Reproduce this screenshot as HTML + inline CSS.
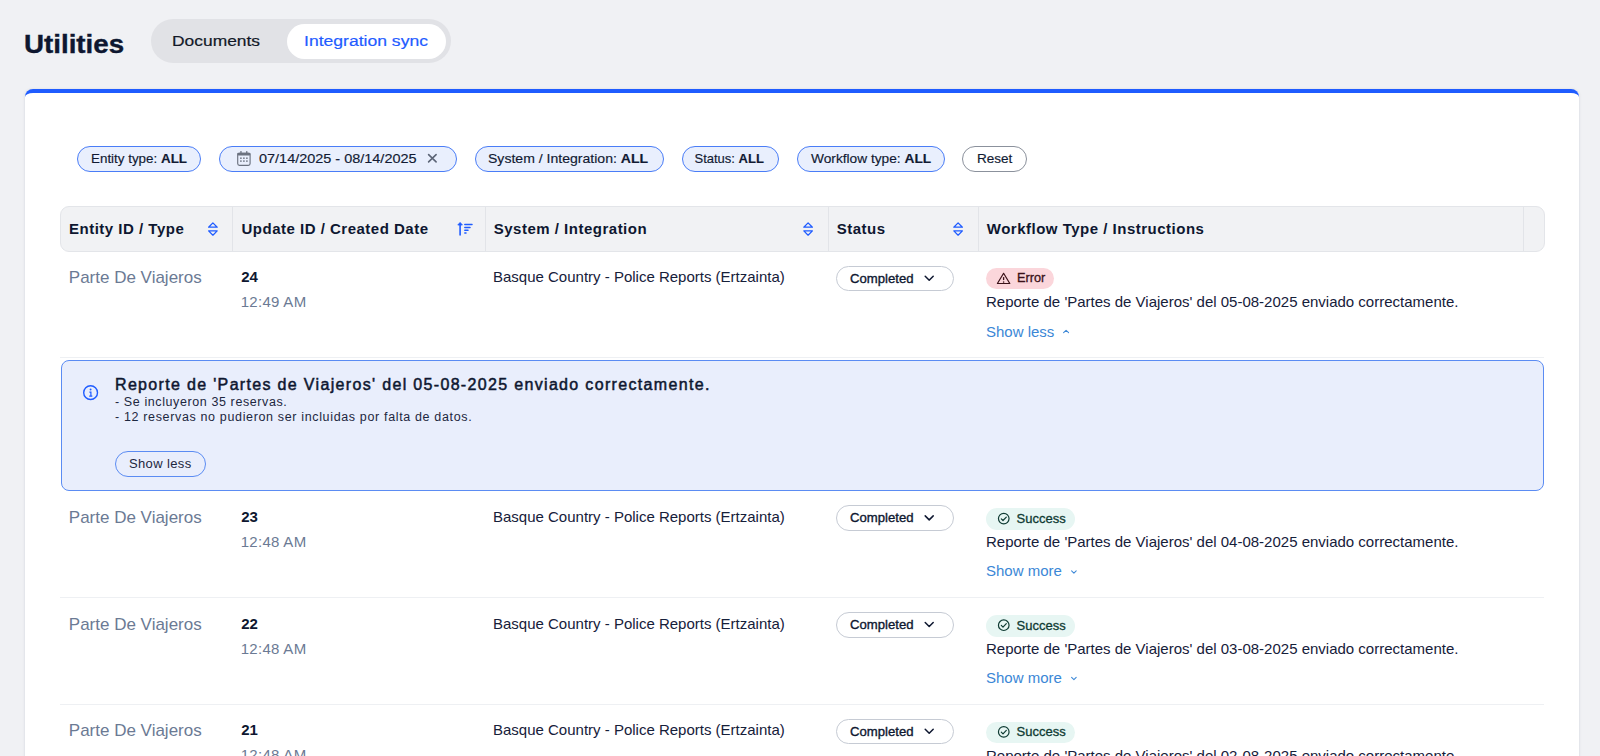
<!DOCTYPE html>
<html><head><meta charset="utf-8"><style>
html,body{margin:0;padding:0;}
body{width:1600px;height:756px;overflow:hidden;position:relative;background:#f0f1f4;font-family:"Liberation Sans",sans-serif;}
.t{position:absolute;white-space:nowrap;}
.b{position:absolute;box-sizing:border-box;}
</style></head><body>
<div class="t " style="left:24px;top:31.84px;font-size:25px;line-height:25px;color:#0e1730;font-weight:700;transform:scaleX(1.109);transform-origin:0 0;-webkit-text-stroke:0.35px #0e1730;">Utilities</div>
<div class="b" style="left:151px;top:19.3px;width:299.5px;height:43.4px;background:#e1e2e6;border-radius:22px;"></div>
<div class="b" style="left:286.5px;top:23.9px;width:159.5px;height:34.9px;background:#fff;border-radius:17.5px;"></div>
<div class="t " style="left:172px;top:32.88px;font-size:15.5px;line-height:15.5px;color:#111827;font-weight:400;transform:scaleX(1.123);transform-origin:0 0;-webkit-text-stroke:0.2px #111827;">Documents</div>
<div class="t " style="left:304px;top:32.88px;font-size:15.5px;line-height:15.5px;color:#1f5cff;font-weight:400;transform:scaleX(1.133);transform-origin:0 0;-webkit-text-stroke:0.2px #1f5cff;">Integration sync</div>
<div class="b" style="left:25px;top:89px;width:1554px;height:700px;background:#fff;border-radius:8px;border-top:4px solid #1f5cff;box-shadow:0.5px 0 0 #e2e4e9, -0.5px 0 0 #e2e4e9, 1px 0 3px rgba(20,30,60,0.05), -1px 0 3px rgba(20,30,60,0.05);"></div>
<div class="b" style="left:77px;top:145.5px;width:124px;height:26px;background:#e9effd;border:1.4px solid #4a7df7;border-radius:14px;box-sizing:border-box;"></div>
<div class="t " style="left:91px;top:152.20px;font-size:13px;line-height:13px;color:#111a33;font-weight:400;transform:scaleX(1.03);transform-origin:0 0;-webkit-text-stroke:0.15px #111a33;">Entity type: <b>ALL</b></div>
<div class="b" style="left:219px;top:145.5px;width:238px;height:26px;background:#e9effd;border:1.4px solid #4a7df7;border-radius:14px;box-sizing:border-box;"></div>
<div class="b" style="left:475px;top:145.5px;width:189px;height:26px;background:#e9effd;border:1.4px solid #4a7df7;border-radius:14px;box-sizing:border-box;"></div>
<div class="t " style="left:488px;top:152.20px;font-size:13px;line-height:13px;color:#111a33;font-weight:400;transform:scaleX(1.081);transform-origin:0 0;-webkit-text-stroke:0.15px #111a33;">System / Integration: <b>ALL</b></div>
<div class="b" style="left:682px;top:145.5px;width:97px;height:26px;background:#e9effd;border:1.4px solid #4a7df7;border-radius:14px;box-sizing:border-box;"></div>
<div class="t " style="left:694.5px;top:152.20px;font-size:13px;line-height:13px;color:#111a33;font-weight:400;transform:scaleX(1.0);transform-origin:0 0;-webkit-text-stroke:0.15px #111a33;">Status: <b>ALL</b></div>
<div class="b" style="left:797px;top:145.5px;width:148px;height:26px;background:#e9effd;border:1.4px solid #4a7df7;border-radius:14px;box-sizing:border-box;"></div>
<div class="t " style="left:810.5px;top:152.20px;font-size:13px;line-height:13px;color:#111a33;font-weight:400;transform:scaleX(1.055);transform-origin:0 0;-webkit-text-stroke:0.15px #111a33;">Workflow type: <b>ALL</b></div>
<div class="t " style="left:258.6px;top:152.20px;font-size:13px;line-height:13px;color:#111a33;font-weight:400;transform:scaleX(1.112);transform-origin:0 0;-webkit-text-stroke:0.15px #111a33;">07/14/2025 - 08/14/2025</div>
<div class="b" style="left:962px;top:145.5px;width:64.5px;height:26px;background:#fff;border:1.4px solid #8b919c;border-radius:14px;box-sizing:border-box;"></div>
<div class="t " style="left:976.6px;top:152.20px;font-size:13px;line-height:13px;color:#111a33;font-weight:400;transform:scaleX(1.04);transform-origin:0 0;-webkit-text-stroke:0.15px #111a33;">Reset</div>
<div class="b" style="left:60.25px;top:206.25px;width:1484.5px;height:45.5px;background:#f1f2f4;border:1px solid #e3e5e9;border-radius:9px;box-sizing:border-box;"></div>
<div class="b" style="left:232.0px;top:207px;width:1px;height:44px;background:#e2e4e8;"></div>
<div class="b" style="left:484.5px;top:207px;width:1px;height:44px;background:#e2e4e8;"></div>
<div class="b" style="left:828.0px;top:207px;width:1px;height:44px;background:#e2e4e8;"></div>
<div class="b" style="left:977.5px;top:207px;width:1px;height:44px;background:#e2e4e8;"></div>
<div class="b" style="left:1522.8px;top:207px;width:1px;height:44px;background:#e2e4e8;"></div>
<div class="t " style="left:69px;top:221.30px;font-size:15px;line-height:15px;color:#0e1730;font-weight:700;letter-spacing:0.5px;">Entity ID / Type</div>
<div class="t " style="left:241.5px;top:221.30px;font-size:15px;line-height:15px;color:#0e1730;font-weight:700;letter-spacing:0.5px;">Update ID / Created Date</div>
<div class="t " style="left:493.75px;top:221.30px;font-size:15px;line-height:15px;color:#0e1730;font-weight:700;letter-spacing:0.5px;">System / Integration</div>
<div class="t " style="left:836.75px;top:221.30px;font-size:15px;line-height:15px;color:#0e1730;font-weight:700;letter-spacing:0.5px;">Status</div>
<div class="t " style="left:986.8px;top:221.30px;font-size:15px;line-height:15px;color:#0e1730;font-weight:700;letter-spacing:0.5px;">Workflow Type / Instructions</div>
<div class="t " style="left:68.8px;top:269.21px;font-size:17px;line-height:17px;color:#6b7a94;font-weight:400;">Parte De Viajeros</div>
<div class="t " style="left:241.2px;top:269.20px;font-size:15px;line-height:15px;color:#0e1730;font-weight:700;">24</div>
<div class="t " style="left:240.7px;top:294.40px;font-size:15px;line-height:15px;color:#6b7a94;font-weight:400;letter-spacing:0.3px;">12:49 AM</div>
<div class="t " style="left:493px;top:269.30px;font-size:15px;line-height:15px;color:#16203a;font-weight:400;">Basque Country - Police Reports (Ertzainta)</div>
<div class="b" style="left:836.1px;top:265.7px;width:117.9px;height:25.6px;background:#fff;border:1.3px solid #c6cbd4;border-radius:14px;box-sizing:border-box;"></div>
<div class="t " style="left:849.8px;top:271.50px;font-size:13px;line-height:13px;color:#0e1730;font-weight:400;transform:scaleX(1.01);transform-origin:0 0;-webkit-text-stroke:0.35px #0e1730;">Completed</div>
<div class="b" style="left:986.2px;top:267.9px;width:67.7px;height:21.5px;background:#fbd6db;border-radius:11px;"></div>
<div class="t " style="left:1016.5px;top:271.40px;font-size:13px;line-height:13px;color:#3a1118;font-weight:400;transform:scaleX(0.98);transform-origin:0 0;-webkit-text-stroke:0.3px #3a1118;">Error</div>
<div class="t " style="left:986px;top:293.60px;font-size:15px;line-height:15px;color:#16203a;font-weight:400;">Reporte de 'Partes de Viajeros' del 05-08-2025 enviado correctamente.</div>
<div class="t " style="left:986px;top:323.60px;font-size:15px;line-height:15px;color:#3b87d6;font-weight:400;">Show less</div>
<div class="b" style="left:60px;top:357px;width:1484px;height:1px;background:#eef0f3;"></div>
<div class="b" style="left:61px;top:359.5px;width:1482.5px;height:131px;background:#e9eefc;border:1px solid #5b8cf3;border-radius:8px;box-sizing:border-box;"></div>
<div class="t " style="left:115px;top:377.06px;font-size:16px;line-height:16px;color:#0e1730;font-weight:400;letter-spacing:1.33px;-webkit-text-stroke:0.5px #0e1730;">Reporte de 'Partes de Viajeros' del 05-08-2025 enviado correctamente.</div>
<div class="t " style="left:115px;top:395.92px;font-size:12.5px;line-height:12.5px;color:#1d2740;font-weight:400;letter-spacing:0.6px;">- Se incluyeron 35 reservas.</div>
<div class="t " style="left:115px;top:410.67px;font-size:12.5px;line-height:12.5px;color:#1d2740;font-weight:400;letter-spacing:0.65px;">- 12 reservas no pudieron ser incluidas por falta de datos.</div>
<div class="b" style="left:115.25px;top:450.6px;width:90.75px;height:26px;background:transparent;border:1px solid #5b8cf3;border-radius:14px;box-sizing:border-box;"></div>
<div class="t " style="left:129px;top:457.10px;font-size:13px;line-height:13px;color:#1d2740;font-weight:400;letter-spacing:0.36px;">Show less</div>
<div class="t " style="left:68.8px;top:508.91px;font-size:17px;line-height:17px;color:#6b7a94;font-weight:400;">Parte De Viajeros</div>
<div class="t " style="left:241.2px;top:508.90px;font-size:15px;line-height:15px;color:#0e1730;font-weight:700;">23</div>
<div class="t " style="left:240.7px;top:534.10px;font-size:15px;line-height:15px;color:#6b7a94;font-weight:400;letter-spacing:0.3px;">12:48 AM</div>
<div class="t " style="left:493px;top:509.00px;font-size:15px;line-height:15px;color:#16203a;font-weight:400;">Basque Country - Police Reports (Ertzainta)</div>
<div class="b" style="left:836.1px;top:505.4px;width:117.9px;height:25.6px;background:#fff;border:1.3px solid #c6cbd4;border-radius:14px;box-sizing:border-box;"></div>
<div class="t " style="left:849.8px;top:511.20px;font-size:13px;line-height:13px;color:#0e1730;font-weight:400;transform:scaleX(1.01);transform-origin:0 0;-webkit-text-stroke:0.35px #0e1730;">Completed</div>
<div class="b" style="left:986.4px;top:508.2px;width:88.5px;height:21.8px;background:#e7f6f3;border-radius:11px;"></div>
<div class="t " style="left:1016.6px;top:512.00px;font-size:13px;line-height:13px;color:#0f3b33;font-weight:400;transform:scaleX(1.0);transform-origin:0 0;-webkit-text-stroke:0.3px #0f3b33;">Success</div>
<div class="t " style="left:986px;top:534.20px;font-size:15px;line-height:15px;color:#16203a;font-weight:400;">Reporte de 'Partes de Viajeros' del 04-08-2025 enviado correctamente.</div>
<div class="t " style="left:986px;top:563.30px;font-size:15px;line-height:15px;color:#3b87d6;font-weight:400;">Show more</div>
<div class="b" style="left:60px;top:597px;width:1484px;height:1px;background:#eef0f3;"></div>
<div class="t " style="left:68.8px;top:615.51px;font-size:17px;line-height:17px;color:#6b7a94;font-weight:400;">Parte De Viajeros</div>
<div class="t " style="left:241.2px;top:615.50px;font-size:15px;line-height:15px;color:#0e1730;font-weight:700;">22</div>
<div class="t " style="left:240.7px;top:640.70px;font-size:15px;line-height:15px;color:#6b7a94;font-weight:400;letter-spacing:0.3px;">12:48 AM</div>
<div class="t " style="left:493px;top:615.60px;font-size:15px;line-height:15px;color:#16203a;font-weight:400;">Basque Country - Police Reports (Ertzainta)</div>
<div class="b" style="left:836.1px;top:612.0px;width:117.9px;height:25.6px;background:#fff;border:1.3px solid #c6cbd4;border-radius:14px;box-sizing:border-box;"></div>
<div class="t " style="left:849.8px;top:617.80px;font-size:13px;line-height:13px;color:#0e1730;font-weight:400;transform:scaleX(1.01);transform-origin:0 0;-webkit-text-stroke:0.35px #0e1730;">Completed</div>
<div class="b" style="left:986.4px;top:614.8px;width:88.5px;height:21.8px;background:#e7f6f3;border-radius:11px;"></div>
<div class="t " style="left:1016.6px;top:618.60px;font-size:13px;line-height:13px;color:#0f3b33;font-weight:400;transform:scaleX(1.0);transform-origin:0 0;-webkit-text-stroke:0.3px #0f3b33;">Success</div>
<div class="t " style="left:986px;top:640.80px;font-size:15px;line-height:15px;color:#16203a;font-weight:400;">Reporte de 'Partes de Viajeros' del 03-08-2025 enviado correctamente.</div>
<div class="t " style="left:986px;top:669.90px;font-size:15px;line-height:15px;color:#3b87d6;font-weight:400;">Show more</div>
<div class="b" style="left:60px;top:704px;width:1484px;height:1px;background:#eef0f3;"></div>
<div class="t " style="left:68.8px;top:722.21px;font-size:17px;line-height:17px;color:#6b7a94;font-weight:400;">Parte De Viajeros</div>
<div class="t " style="left:241.2px;top:722.20px;font-size:15px;line-height:15px;color:#0e1730;font-weight:700;">21</div>
<div class="t " style="left:240.7px;top:747.40px;font-size:15px;line-height:15px;color:#6b7a94;font-weight:400;letter-spacing:0.3px;">12:48 AM</div>
<div class="t " style="left:493px;top:722.30px;font-size:15px;line-height:15px;color:#16203a;font-weight:400;">Basque Country - Police Reports (Ertzainta)</div>
<div class="b" style="left:836.1px;top:718.7px;width:117.9px;height:25.6px;background:#fff;border:1.3px solid #c6cbd4;border-radius:14px;box-sizing:border-box;"></div>
<div class="t " style="left:849.8px;top:724.50px;font-size:13px;line-height:13px;color:#0e1730;font-weight:400;transform:scaleX(1.01);transform-origin:0 0;-webkit-text-stroke:0.35px #0e1730;">Completed</div>
<div class="b" style="left:986.4px;top:721.5px;width:88.5px;height:21.8px;background:#e7f6f3;border-radius:11px;"></div>
<div class="t " style="left:1016.6px;top:725.30px;font-size:13px;line-height:13px;color:#0f3b33;font-weight:400;transform:scaleX(1.0);transform-origin:0 0;-webkit-text-stroke:0.3px #0f3b33;">Success</div>
<div class="t " style="left:986px;top:747.50px;font-size:15px;line-height:15px;color:#16203a;font-weight:400;">Reporte de 'Partes de Viajeros' del 02-08-2025 enviado correctamente.</div>
<div class="t " style="left:986px;top:776.60px;font-size:15px;line-height:15px;color:#3b87d6;font-weight:400;">Show more</div>
<svg style="position:absolute;left:0;top:0" width="1600" height="756" viewBox="0 0 1600 756"><rect x="237.7" y="153.3" width="12.4" height="12.1" rx="1.8" fill="none" stroke="#6b7280" stroke-width="1.15"/><rect x="237.2" y="152.8" width="13.4" height="2.6" rx="1.3" fill="#6b7280"/><rect x="240.3" y="150.9" width="1.3" height="2.6" rx="0.5" fill="#6b7280"/><rect x="246.1" y="150.9" width="1.3" height="2.6" rx="0.5" fill="#6b7280"/><rect x="240.15" y="157.45" width="1.5" height="1.5" fill="#6b7280"/><rect x="240.15" y="160.35" width="1.5" height="1.5" fill="#6b7280"/><rect x="243.15" y="157.45" width="1.5" height="1.5" fill="#6b7280"/><rect x="243.15" y="160.35" width="1.5" height="1.5" fill="#6b7280"/><rect x="246.15" y="157.45" width="1.5" height="1.5" fill="#6b7280"/><rect x="246.15" y="160.35" width="1.5" height="1.5" fill="#6b7280"/><path d="M428.6 154.6 L436.1 161.9 M436.1 154.6 L428.6 161.9" stroke="#5c6577" stroke-width="1.6" stroke-linecap="round" fill="none"/><path d="M208.6 227.2 L212.9 222.9 L217.20000000000002 227.2 Z M208.6 230.9 L217.20000000000002 230.9 L212.9 235.2 Z" fill="none" stroke="#1f5cff" stroke-width="1.25" stroke-linejoin="round"/><path d="M803.8000000000001 227.2 L808.1 222.9 L812.4 227.2 Z M803.8000000000001 230.9 L812.4 230.9 L808.1 235.2 Z" fill="none" stroke="#1f5cff" stroke-width="1.25" stroke-linejoin="round"/><path d="M953.8000000000001 227.2 L958.1 222.9 L962.4 227.2 Z M953.8000000000001 230.9 L962.4 230.9 L958.1 235.2 Z" fill="none" stroke="#1f5cff" stroke-width="1.25" stroke-linejoin="round"/><path d="M460.1 224 L460.1 235" stroke="#1f5cff" stroke-width="1.6" stroke-linecap="round"/><path d="M457.8 225 L460.1 222.4 L462.4 225 Z" fill="#1f5cff" stroke="#1f5cff" stroke-width="0.8" stroke-linejoin="round"/><path d="M464.8 224.4 L472 224.4" stroke="#1f5cff" stroke-width="1.5" stroke-linecap="round"/><path d="M464.8 227.4 L470 227.4" stroke="#1f5cff" stroke-width="1.5" stroke-linecap="round"/><path d="M464.8 230.3 L468 230.3" stroke="#1f5cff" stroke-width="1.5" stroke-linecap="round"/><path d="M464.8 233.1 L466 233.1" stroke="#1f5cff" stroke-width="1.5" stroke-linecap="round"/><path d="M925.2 276.2 L929.2 280.2 L933.2 276.2" fill="none" stroke="#0e1730" stroke-width="1.5" stroke-linecap="round" stroke-linejoin="round"/><path d="M1003.6 273.3 L1009.8 283.5 L997.4 283.5 Z" fill="none" stroke="#3a1118" stroke-width="1.2" stroke-linejoin="round"/><path d="M1003.6 277.1 L1003.6 280.1" stroke="#3a1118" stroke-width="1.3"/><rect x="1002.95" y="281.4" width="1.3" height="1.3" fill="#3a1118"/><path d="M1063.6 332.7 L1066.1 330.3 L1068.6 332.7" fill="none" stroke="#3b87d6" stroke-width="1.05" stroke-linecap="round" stroke-linejoin="round"/><path d="M925.2 515.9 L929.2 519.9 L933.2 515.9" fill="none" stroke="#0e1730" stroke-width="1.5" stroke-linecap="round" stroke-linejoin="round"/><circle cx="1003.75" cy="518.6" r="5.3" fill="none" stroke="#0f3b33" stroke-width="1.2"/><path d="M1001.3 518.8 L1003 520.5 L1006.3 517.1" fill="none" stroke="#0f3b33" stroke-width="1.2" stroke-linecap="round" stroke-linejoin="round"/><path d="M1071.6 570.8 L1073.9 573.1 L1076.2 570.8" fill="none" stroke="#3b87d6" stroke-width="1.05" stroke-linecap="round" stroke-linejoin="round"/><path d="M925.2 622.5 L929.2 626.5 L933.2 622.5" fill="none" stroke="#0e1730" stroke-width="1.5" stroke-linecap="round" stroke-linejoin="round"/><circle cx="1003.75" cy="625.1999999999999" r="5.3" fill="none" stroke="#0f3b33" stroke-width="1.2"/><path d="M1001.3 625.4 L1003 627.0999999999999 L1006.3 623.6999999999999" fill="none" stroke="#0f3b33" stroke-width="1.2" stroke-linecap="round" stroke-linejoin="round"/><path d="M1071.6 677.4 L1073.9 679.6999999999999 L1076.2 677.4" fill="none" stroke="#3b87d6" stroke-width="1.05" stroke-linecap="round" stroke-linejoin="round"/><path d="M925.2 729.2 L929.2 733.2 L933.2 729.2" fill="none" stroke="#0e1730" stroke-width="1.5" stroke-linecap="round" stroke-linejoin="round"/><circle cx="1003.75" cy="731.9" r="5.3" fill="none" stroke="#0f3b33" stroke-width="1.2"/><path d="M1001.3 732.1 L1003 733.8 L1006.3 730.4" fill="none" stroke="#0f3b33" stroke-width="1.2" stroke-linecap="round" stroke-linejoin="round"/><path d="M1071.6 784.1 L1073.9 786.4 L1076.2 784.1" fill="none" stroke="#3b87d6" stroke-width="1.05" stroke-linecap="round" stroke-linejoin="round"/><circle cx="90.6" cy="392.65" r="6.9" fill="none" stroke="#1f5cff" stroke-width="1.4"/><circle cx="90.6" cy="389.5" r="0.95" fill="#1f5cff"/><path d="M89.4 392.1 L90.9 392.1 L90.9 396.1 M89.2 396.1 L92.3 396.1" fill="none" stroke="#1f5cff" stroke-width="1.2"/></svg>
</body></html>
